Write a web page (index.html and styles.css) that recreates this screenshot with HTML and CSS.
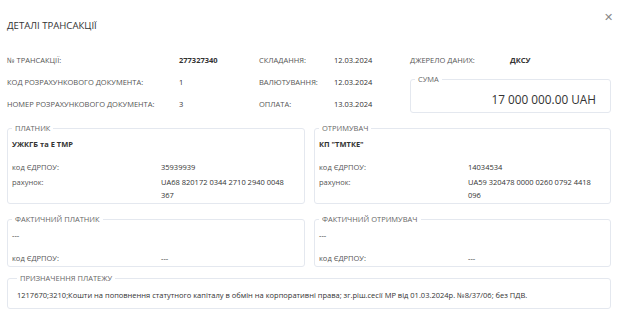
FILE: index.html
```html
<!DOCTYPE html>
<html lang="uk">
<head>
    <meta charset="UTF-8">
    <title>Деталі трансакції</title>
    <link rel="stylesheet" href="styles.css">
</head>
<body>
    <div class="modal">
        <header class="modal-head">
            <h1>ДЕТАЛІ ТРАНСАКЦІЇ</h1>
            <span class="close">&#x2715;</span>
        </header>

        <div class="summary">
            <div class="info">
                <span class="lbl">№ ТРАНСАКЦІЇ:</span>
                <span class="val bold">277327340</span>
                <span class="lbl">СКЛАДАННЯ:</span>
                <span class="val">12.03.2024</span>

                <span class="lbl">КОД РОЗРАХУНКОВОГО ДОКУМЕНТА:</span>
                <span class="val">1</span>
                <span class="lbl">ВАЛЮТУВАННЯ:</span>
                <span class="val">12.03.2024</span>

                <span class="lbl">НОМЕР РОЗРАХУНКОВОГО ДОКУМЕНТА:</span>
                <span class="val">3</span>
                <span class="lbl">ОПЛАТА:</span>
                <span class="val">13.03.2024</span>
            </div>
            <div class="side">
                <div class="source">
                    <span class="lbl">ДЖЕРЕЛО ДАНИХ:</span>
                    <span class="val bold">ДКСУ</span>
                </div>
                <fieldset class="box sum">
                    <legend>СУМА</legend>
                    <div class="amount">17 000 000.00 UAH</div>
                </fieldset>
            </div>
        </div>

        <div class="parties">
            <fieldset class="box">
                <legend>ПЛАТНИК</legend>
                <div class="name">УЖКГБ та Е ТМР</div>
                <div class="row"><span class="lbl">код ЄДРПОУ:</span><span class="val">35939939</span></div>
                <div class="row"><span class="lbl">рахунок:</span><span class="val">UA68 820172 0344 2710 2940 0048 367</span></div>
            </fieldset>
            <fieldset class="box">
                <legend>ОТРИМУВАЧ</legend>
                <div class="name">КП "ТМТКЕ"</div>
                <div class="row"><span class="lbl">код ЄДРПОУ:</span><span class="val">14034534</span></div>
                <div class="row"><span class="lbl">рахунок:</span><span class="val">UA59 320478 0000 0260 0792 4418 096</span></div>
            </fieldset>
            <fieldset class="box">
                <legend>ФАКТИЧНИЙ ПЛАТНИК</legend>
                <div class="name plain">---</div>
                <div class="row"><span class="lbl">код ЄДРПОУ:</span><span class="val">---</span></div>
            </fieldset>
            <fieldset class="box">
                <legend>ФАКТИЧНИЙ ОТРИМУВАЧ</legend>
                <div class="name plain">---</div>
                <div class="row"><span class="lbl">код ЄДРПОУ:</span><span class="val">---</span></div>
            </fieldset>
        </div>

        <fieldset class="box purpose">
            <legend>ПРИЗНАЧЕННЯ ПЛАТЕЖУ</legend>
            <div class="text">1217670;3210;Кошти на поповнення статутного капіталу в обмін на корпоративні права; зг.ріш.сесії МР від 01.03.2024р. №8/37/06; без ПДВ.</div>
        </fieldset>
    </div>
</body>
</html>
```

FILE: styles.css
```css
body {
    margin: 0;
    background: #fff;
    font-family: "Open Sans", sans-serif;
    font-size: 7.5px;
    color: #444;
}
.modal {
    width: 623px;
    height: 313px;
    box-sizing: border-box;
    padding: 0 12px 0 7px;
    overflow: hidden;
}
.modal-head {
    display: flex;
    justify-content: space-between;
    align-items: flex-start;
    height: 49px;
}
.modal-head h1 {
    margin: 19px 0 0 0;
    font-size: 9.6px;
    font-weight: 400;
    color: #333;
    line-height: 14px;
}
.close {
    margin: 10px -2px 0 0;
    font-size: 11px;
    color: #888;
    line-height: 14px;
}
.lbl {
    color: #555;
}
.val {
    color: #333;
}
.bold {
    font-weight: 700;
}
.summary {
    display: flex;
}
.info {
    display: grid;
    grid-template-columns: 172px 80px 75px 76px;
    grid-auto-rows: 22px;
    align-items: center;
}
.side {
    flex: 1;
}
.source {
    display: grid;
    grid-template-columns: 100px 1fr;
    height: 22px;
    align-items: center;
}
.box {
    margin: 0;
    padding: 0 4px;
    border: 1px solid #e4e8ef;
    border-radius: 3px;
    min-width: 0;
}
.box legend {
    padding: 0 3px;
    color: #666;
    font-size: 7.5px;
    line-height: 10px;
}
.sum {
    height: 39px;
    box-sizing: border-box;
    margin-top: 3px;
}
.amount {
    text-align: right;
    font-size: 11.8px;
    color: #333;
    line-height: 16px;
    padding: 7px 10px 0 0;
}
.parties {
    display: grid;
    grid-template-columns: 298px 297px;
    column-gap: 9px;
    row-gap: 10px;
    margin-top: 8px;
}
.name {
    font-weight: 700;
    color: #333;
    line-height: 12px;
    padding-top: 5px;
    height: 23px;
}
.name.plain {
    font-weight: 400;
}
.row {
    display: grid;
    grid-template-columns: 149px 1fr;
    line-height: 13px;
    margin-bottom: 2px;
}
.row:last-child {
    margin-bottom: 1px;
}
.row .val {
    padding-right: 4px;
}
.purpose {
    margin-top: 6px;
    padding: 6px 9px 7px;
}
.purpose .text {
    color: #333;
    line-height: 12px;
}
```
